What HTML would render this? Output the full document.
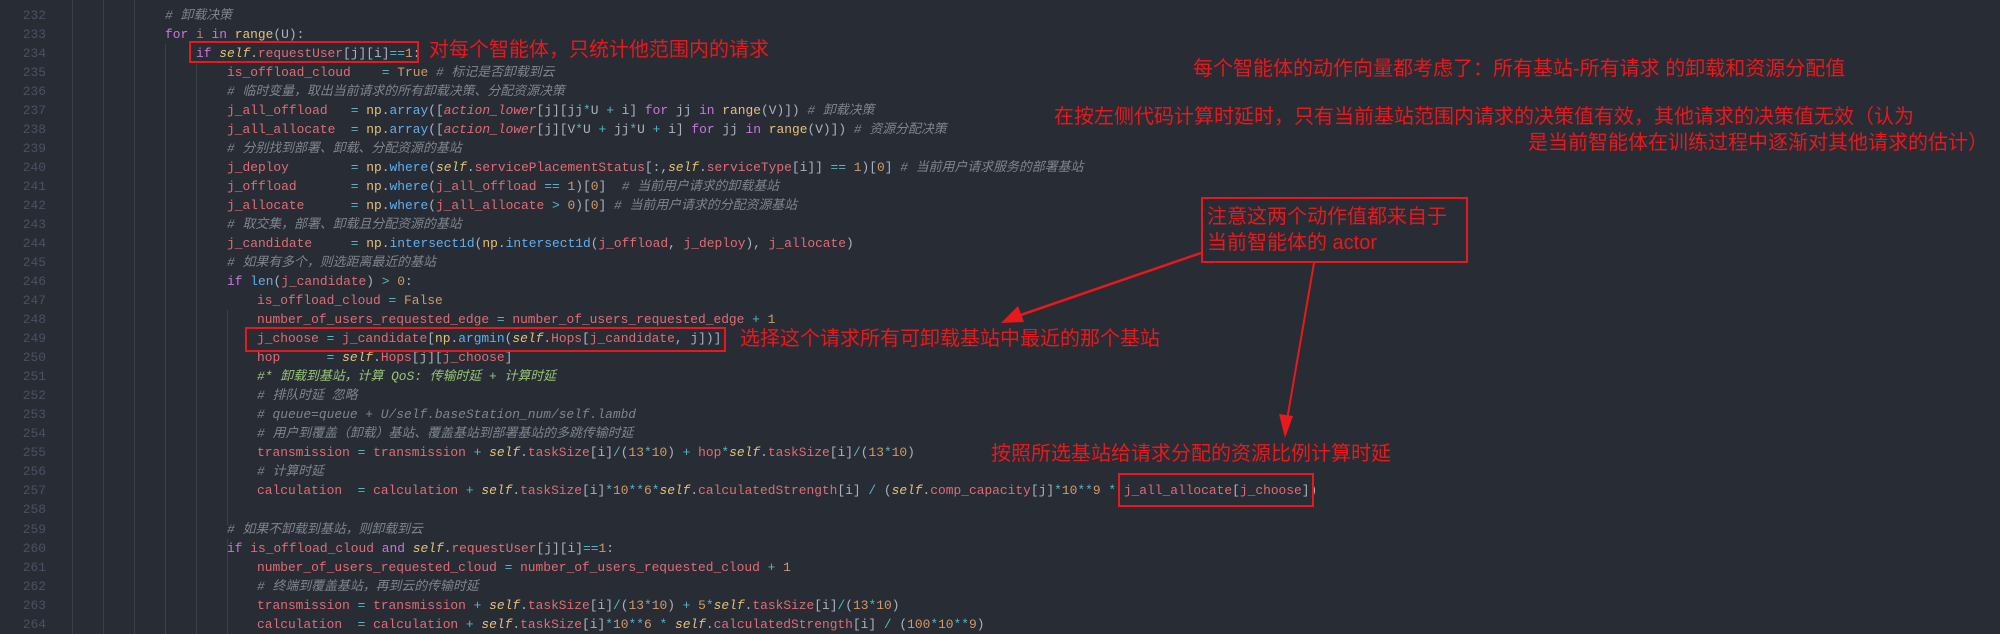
<!DOCTYPE html>
<html><head><meta charset="utf-8"><style>
html,body{margin:0;padding:0}
body{width:2000px;height:634px;background:#282c34;position:relative;overflow:hidden;font-family:"Liberation Mono","Noto Sans CJK SC",monospace;font-size:12.9px;color:#abb2bf}
.ln{position:absolute;left:0;width:46px;text-align:right;color:#495162;height:19px;line-height:19px}
.l{position:absolute;white-space:pre;height:19px;line-height:19px}
.g{position:absolute;width:1px;background:#3b4048}
.k{color:#c678dd}.s{color:#e5c07b;font-style:italic}.v{color:#e06c75}.f{color:#61afef}.n{color:#d19a66}.o{color:#56b6c2}.c{color:#7f848e;font-style:italic}.y{color:#e5c07b}.gr{color:#98c379;font-style:italic}.vi{color:#e06c75;font-style:italic}
.a{position:absolute;color:#e8191c;font-family:"Liberation Sans","Noto Sans CJK SC",sans-serif;font-size:20px;white-space:nowrap;line-height:24px}
.b{position:absolute;border:2px solid #e8191c;box-sizing:border-box}
</style></head><body>
<div class="g" style="left:72px;top:0;height:634px"></div>
<div class="g" style="left:103px;top:0;height:634px"></div>
<div class="g" style="left:134px;top:0;height:634px"></div>
<div class="g" style="left:165px;top:44px;height:590px"></div>
<div class="g" style="left:196px;top:63px;height:571px"></div>
<div class="g" style="left:227px;top:310px;height:215px"></div>
<div class="g" style="left:227px;top:539px;height:95px"></div>

<div class="ln" style="top:6px">232</div><div class="l" style="top:6px;left:165px"><span class="c"># 卸载决策</span></div>
<div class="ln" style="top:25px">233</div><div class="l" style="top:25px;left:165px"><span class="k">for</span> <span class="v">i</span> <span class="k">in</span> <span class="y">range</span>(U):</div>
<div class="ln" style="top:44px">234</div><div class="l" style="top:44px;left:196px"><span class="k">if</span> <span class="s">self</span>.<span class="v">requestUser</span>[j][i]<span class="o">==</span><span class="n">1</span>:</div>
<div class="ln" style="top:63px">235</div><div class="l" style="top:63px;left:227px"><span class="v">is_offload_cloud</span>    <span class="o">=</span> <span class="n">True</span> <span class="c"># 标记是否卸载到云</span></div>
<div class="ln" style="top:82px">236</div><div class="l" style="top:82px;left:227px"><span class="c"># 临时变量，取出当前请求的所有卸载决策、分配资源决策</span></div>
<div class="ln" style="top:101px">237</div><div class="l" style="top:101px;left:227px"><span class="v">j_all_offload</span>   <span class="o">=</span> <span class="y">np</span>.<span class="f">array</span>([<span class="vi">action_lower</span>[j][jj<span class="o">*</span>U <span class="o">+</span> i] <span class="k">for</span> jj <span class="k">in</span> <span class="y">range</span>(V)]) <span class="c"># 卸载决策</span></div>
<div class="ln" style="top:120px">238</div><div class="l" style="top:120px;left:227px"><span class="v">j_all_allocate</span>  <span class="o">=</span> <span class="y">np</span>.<span class="f">array</span>([<span class="vi">action_lower</span>[j][V<span class="o">*</span>U <span class="o">+</span> jj<span class="o">*</span>U <span class="o">+</span> i] <span class="k">for</span> jj <span class="k">in</span> <span class="y">range</span>(V)]) <span class="c"># 资源分配决策</span></div>
<div class="ln" style="top:139px">239</div><div class="l" style="top:139px;left:227px"><span class="c"># 分别找到部署、卸载、分配资源的基站</span></div>
<div class="ln" style="top:158px">240</div><div class="l" style="top:158px;left:227px"><span class="v">j_deploy</span>        <span class="o">=</span> <span class="y">np</span>.<span class="f">where</span>(<span class="s">self</span>.<span class="v">servicePlacementStatus</span>[:,<span class="s">self</span>.<span class="v">serviceType</span>[i]] <span class="o">==</span> <span class="n">1</span>)[<span class="n">0</span>] <span class="c"># 当前用户请求服务的部署基站</span></div>
<div class="ln" style="top:177px">241</div><div class="l" style="top:177px;left:227px"><span class="v">j_offload</span>       <span class="o">=</span> <span class="y">np</span>.<span class="f">where</span>(<span class="v">j_all_offload</span> <span class="o">==</span> <span class="n">1</span>)[<span class="n">0</span>]  <span class="c"># 当前用户请求的卸载基站</span></div>
<div class="ln" style="top:196px">242</div><div class="l" style="top:196px;left:227px"><span class="v">j_allocate</span>      <span class="o">=</span> <span class="y">np</span>.<span class="f">where</span>(<span class="v">j_all_allocate</span> <span class="o">&gt;</span> <span class="n">0</span>)[<span class="n">0</span>] <span class="c"># 当前用户请求的分配资源基站</span></div>
<div class="ln" style="top:215px">243</div><div class="l" style="top:215px;left:227px"><span class="c"># 取交集，部署、卸载且分配资源的基站</span></div>
<div class="ln" style="top:234px">244</div><div class="l" style="top:234px;left:227px"><span class="v">j_candidate</span>     <span class="o">=</span> <span class="y">np</span>.<span class="f">intersect1d</span>(<span class="y">np</span>.<span class="f">intersect1d</span>(<span class="v">j_offload</span>, <span class="v">j_deploy</span>), <span class="v">j_allocate</span>)</div>
<div class="ln" style="top:253px">245</div><div class="l" style="top:253px;left:227px"><span class="c"># 如果有多个，则选距离最近的基站</span></div>
<div class="ln" style="top:272px">246</div><div class="l" style="top:272px;left:227px"><span class="k">if</span> <span class="f">len</span>(<span class="v">j_candidate</span>) <span class="o">&gt;</span> <span class="n">0</span>:</div>
<div class="ln" style="top:291px">247</div><div class="l" style="top:291px;left:257px"><span class="v">is_offload_cloud</span> <span class="o">=</span> <span class="n">False</span></div>
<div class="ln" style="top:310px">248</div><div class="l" style="top:310px;left:257px"><span class="v">number_of_users_requested_edge</span> <span class="o">=</span> <span class="v">number_of_users_requested_edge</span> <span class="o">+</span> <span class="n">1</span></div>
<div class="ln" style="top:329px">249</div><div class="l" style="top:329px;left:257px"><span class="v">j_choose</span> <span class="o">=</span> <span class="v">j_candidate</span>[<span class="y">np</span>.<span class="f">argmin</span>(<span class="s">self</span>.<span class="v">Hops</span>[<span class="v">j_candidate</span>, j])]</div>
<div class="ln" style="top:348px">250</div><div class="l" style="top:348px;left:257px"><span class="v">hop</span>      <span class="o">=</span> <span class="s">self</span>.<span class="v">Hops</span>[j][<span class="v">j_choose</span>]</div>
<div class="ln" style="top:367px">251</div><div class="l" style="top:367px;left:257px"><span class="gr">#* 卸载到基站，计算 QoS: 传输时延 + 计算时延</span></div>
<div class="ln" style="top:386px">252</div><div class="l" style="top:386px;left:257px"><span class="c"># 排队时延 忽略</span></div>
<div class="ln" style="top:405px">253</div><div class="l" style="top:405px;left:257px"><span class="c"># queue=queue + U/self.baseStation_num/self.lambd</span></div>
<div class="ln" style="top:424px">254</div><div class="l" style="top:424px;left:257px"><span class="c"># 用户到覆盖（卸载）基站、覆盖基站到部署基站的多跳传输时延</span></div>
<div class="ln" style="top:443px">255</div><div class="l" style="top:443px;left:257px"><span class="v">transmission</span> <span class="o">=</span> <span class="v">transmission</span> <span class="o">+</span> <span class="s">self</span>.<span class="v">taskSize</span>[i]<span class="o">/</span>(<span class="n">13</span><span class="o">*</span><span class="n">10</span>) <span class="o">+</span> <span class="v">hop</span><span class="o">*</span><span class="s">self</span>.<span class="v">taskSize</span>[i]<span class="o">/</span>(<span class="n">13</span><span class="o">*</span><span class="n">10</span>)</div>
<div class="ln" style="top:462px">256</div><div class="l" style="top:462px;left:257px"><span class="c"># 计算时延</span></div>
<div class="ln" style="top:481px">257</div><div class="l" style="top:481px;left:257px"><span class="v">calculation</span>  <span class="o">=</span> <span class="v">calculation</span> <span class="o">+</span> <span class="s">self</span>.<span class="v">taskSize</span>[i]<span class="o">*</span><span class="n">10</span><span class="o">**</span><span class="n">6</span><span class="o">*</span><span class="s">self</span>.<span class="v">calculatedStrength</span>[i] <span class="o">/</span> (<span class="s">self</span>.<span class="v">comp_capacity</span>[j]<span class="o">*</span><span class="n">10</span><span class="o">**</span><span class="n">9</span> <span class="o">*</span> <span class="v">j_all_allocate</span>[<span class="v">j_choose</span>])</div>
<div class="ln" style="top:500px">258</div>
<div class="ln" style="top:520px">259</div><div class="l" style="top:520px;left:227px"><span class="c"># 如果不卸载到基站，则卸载到云</span></div>
<div class="ln" style="top:539px">260</div><div class="l" style="top:539px;left:227px"><span class="k">if</span> <span class="v">is_offload_cloud</span> <span class="k">and</span> <span class="s">self</span>.<span class="v">requestUser</span>[j][i]<span class="o">==</span><span class="n">1</span>:</div>
<div class="ln" style="top:558px">261</div><div class="l" style="top:558px;left:257px"><span class="v">number_of_users_requested_cloud</span> <span class="o">=</span> <span class="v">number_of_users_requested_cloud</span> <span class="o">+</span> <span class="n">1</span></div>
<div class="ln" style="top:577px">262</div><div class="l" style="top:577px;left:257px"><span class="c"># 终端到覆盖基站，再到云的传输时延</span></div>
<div class="ln" style="top:596px">263</div><div class="l" style="top:596px;left:257px"><span class="v">transmission</span> <span class="o">=</span> <span class="v">transmission</span> <span class="o">+</span> <span class="s">self</span>.<span class="v">taskSize</span>[i]<span class="o">/</span>(<span class="n">13</span><span class="o">*</span><span class="n">10</span>) <span class="o">+</span> <span class="n">5</span><span class="o">*</span><span class="s">self</span>.<span class="v">taskSize</span>[i]<span class="o">/</span>(<span class="n">13</span><span class="o">*</span><span class="n">10</span>)</div>
<div class="ln" style="top:615px">264</div><div class="l" style="top:615px;left:257px"><span class="v">calculation</span>  <span class="o">=</span> <span class="v">calculation</span> <span class="o">+</span> <span class="s">self</span>.<span class="v">taskSize</span>[i]<span class="o">*</span><span class="n">10</span><span class="o">**</span><span class="n">6</span> <span class="o">*</span> <span class="s">self</span>.<span class="v">calculatedStrength</span>[i] <span class="o">/</span> (<span class="n">100</span><span class="o">*</span><span class="n">10</span><span class="o">**</span><span class="n">9</span>)</div>

<div class="b" style="left:189px;top:41px;width:230px;height:22px"></div>
<div class="b" style="left:245px;top:327px;width:481px;height:25px"></div>
<div class="b" style="left:1118px;top:473px;width:196px;height:34px"></div>
<div class="b" style="left:1201px;top:197px;width:267px;height:66px"></div>

<div class="a" style="left:429px;top:38px">对每个智能体，只统计他范围内的请求</div>
<div class="a" style="left:1193px;top:57px">每个智能体的动作向量都考虑了：所有基站-所有请求 的卸载和资源分配值</div>
<div class="a" style="left:1054px;top:105px">在按左侧代码计算时延时，只有当前基站范围内请求的决策值有效，其他请求的决策值无效（认为</div>
<div class="a" style="left:1528px;top:131px">是当前智能体在训练过程中逐渐对其他请求的估计）</div>
<div class="a" style="left:1207px;top:205px">注意这两个动作值都来自于</div>
<div class="a" style="left:1207px;top:231px">当前智能体的 actor</div>
<div class="a" style="left:740px;top:327px">选择这个请求所有可卸载基站中最近的那个基站</div>
<div class="a" style="left:991px;top:442px">按照所选基站给请求分配的资源比例计算时延</div>

<svg width="2000" height="634" style="position:absolute;left:0;top:0">
<line x1="1201" y1="253" x2="1012" y2="318" stroke="#e8191c" stroke-width="2.5"/>
<polygon points="1001,323 1018,306 1024,322" fill="#e8191c"/>
<line x1="1314" y1="263" x2="1287" y2="420" stroke="#e8191c" stroke-width="2"/>
<polygon points="1285,438 1279,414 1293,416" fill="#e8191c"/>
</svg>
</body></html>
